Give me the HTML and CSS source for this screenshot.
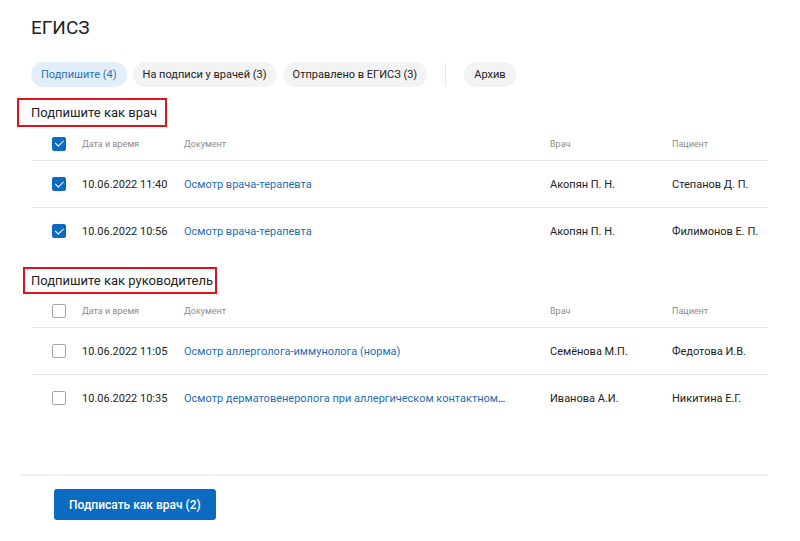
FILE: index.html
```html
<!DOCTYPE html>
<html lang="ru">
<head>
    <meta charset="UTF-8">
    <meta name="viewport" content="width=device-width, initial-scale=1.0">
    <title>ЕГИСЗ</title>
    <link rel="stylesheet" href="styles.css">
</head>
<body>

<div class="page">
    <h1 class="page-title">ЕГИСЗ</h1>

    <!-- Вкладки -->
    <nav class="tabs">
        <button class="tab active">Подпишите (4)</button>
        <button class="tab">На подписи у врачей (3)</button>
        <button class="tab">Отправлено в ЕГИСЗ (3)</button>
        <span class="tabs-sep"></span>
        <button class="tab">Архив</button>
    </nav>

    <!-- Подпись как врач -->
    <section class="sign-section">
        <h2 class="section-title mark-doctor">Подпишите как врач</h2>
        <div class="doc-table">
            <div class="doc-row head">
                <div class="cell-check"><span class="checkbox checked"></span></div>
                <div>Дата и время</div>
                <div>Документ</div>
                <div>Врач</div>
                <div>Пациент</div>
            </div>
            <div class="doc-row">
                <div class="cell-check"><span class="checkbox checked"></span></div>
                <div>10.06.2022 11:40</div>
                <div class="cell-doc"><a href="#">Осмотр врача-терапевта</a></div>
                <div>Акопян П. Н.</div>
                <div>Степанов Д. П.</div>
            </div>
            <div class="doc-row">
                <div class="cell-check"><span class="checkbox checked"></span></div>
                <div>10.06.2022 10:56</div>
                <div class="cell-doc"><a href="#">Осмотр врача-терапевта</a></div>
                <div>Акопян П. Н.</div>
                <div>Филимонов Е. П.</div>
            </div>
        </div>
    </section>

    <!-- Подпись как руководитель -->
    <section class="sign-section">
        <h2 class="section-title mark-head">Подпишите как руководитель</h2>
        <div class="doc-table">
            <div class="doc-row head">
                <div class="cell-check"><span class="checkbox"></span></div>
                <div>Дата и время</div>
                <div>Документ</div>
                <div>Врач</div>
                <div>Пациент</div>
            </div>
            <div class="doc-row">
                <div class="cell-check"><span class="checkbox"></span></div>
                <div>10.06.2022 11:05</div>
                <div class="cell-doc"><a href="#">Осмотр аллерголога-иммунолога (норма)</a></div>
                <div>Семёнова М.П.</div>
                <div>Федотова И.В.</div>
            </div>
            <div class="doc-row">
                <div class="cell-check"><span class="checkbox"></span></div>
                <div>10.06.2022 10:35</div>
                <div class="cell-doc"><a href="#">Осмотр дерматовенеролога при аллергическом контактном дерматите</a></div>
                <div>Иванова А.И.</div>
                <div>Никитина Е.Г.</div>
            </div>
        </div>
    </section>

    <footer class="page-footer">
        <button class="btn-primary">Подписать как врач (2)</button>
    </footer>
</div>

</body>
</html>
```

FILE: styles.css
```css
:root {
    --text-color: #222222;
    --muted-color: #8c8c8c;
    --link-color: #1f6db4;
    --primary-color: #0b6bc0;
    --line-color: #e6e6e6;
    --chip-bg: #f3f3f3;
    --chip-active-bg: #e2eef9;
    --chip-active-text: #2a74b4;
    --mark-color: #e0121c;
}

* { margin: 0; padding: 0; box-sizing: border-box; }
body {
    font-family: Roboto, "Liberation Sans", Arial, sans-serif;
    color: var(--text-color);
    background: #ffffff;
}

.page { width: 800px; padding: 17px 32px 0 31px; }

.page-title {
    font-size: 19px;
    font-weight: 400;
    line-height: 22px;
}

/* Вкладки */
.tabs {
    display: flex;
    align-items: center;
    gap: 6px;
    margin-top: 23px;
}
.tab {
    height: 25px;
    padding: 0 10px;
    border: none;
    border-radius: 13px;
    background: var(--chip-bg);
    color: var(--text-color);
    font-family: inherit;
    font-size: 11px;
}
.tab.active { background: var(--chip-active-bg); color: var(--chip-active-text); }
.tabs-sep {
    width: 1px;
    height: 23px;
    margin: 0 12px;
    background: var(--line-color);
}

/* Секции */
.sign-section { margin-top: 11px; }
.sign-section + .sign-section { margin-top: 13px; }

.section-title {
    display: inline-block;
    font-size: 13px;
    font-weight: 400;
    border: 2px solid var(--mark-color);
}
.mark-doctor { margin-left: -14px; padding: 0 8px 0 12px; line-height: 25px; }
.mark-head { margin-left: -8px; padding: 0 2px 0 6px; line-height: 23px; }

/* Таблица */
.doc-table { margin-left: 1px; }
.doc-row {
    display: grid;
    grid-template-columns: 50px 102px 366px 122px 1fr;
    align-items: center;
    height: 47px;
    font-size: 11px;
    border-top: 1px solid var(--line-color);
}
.doc-row.head {
    height: 33px;
    border-top: none;
    font-size: 9px;
    color: var(--muted-color);
}
.cell-check { display: flex; padding-left: 20px; }
.cell-doc { padding-right: 44px; white-space: nowrap; overflow: hidden; text-overflow: ellipsis; }
.cell-doc a { color: var(--link-color); text-decoration: none; }

.checkbox {
    width: 14px;
    height: 14px;
    border: 1.5px solid #a6a6a6;
    border-radius: 2px;
    position: relative;
}
.checkbox.checked { background: var(--primary-color); border-color: var(--primary-color); }
.checkbox.checked::after {
    content: "";
    position: absolute;
    left: 3.5px;
    top: 0.5px;
    width: 3.5px;
    height: 7px;
    border: solid #ffffff;
    border-width: 0 1.6px 1.6px 0;
    transform: rotate(45deg);
}

/* Подвал */
.page-footer {
    margin: 53px 0 0 -11px;
    padding: 13px 0 20px 34px;
    border-top: 2px solid #f2f2f2;
}
.btn-primary {
    height: 31px;
    padding: 0 15px;
    border: none;
    border-radius: 3px;
    background: var(--primary-color);
    color: #ffffff;
    font-family: inherit;
    font-size: 12px;
    font-weight: 500;
}
```
